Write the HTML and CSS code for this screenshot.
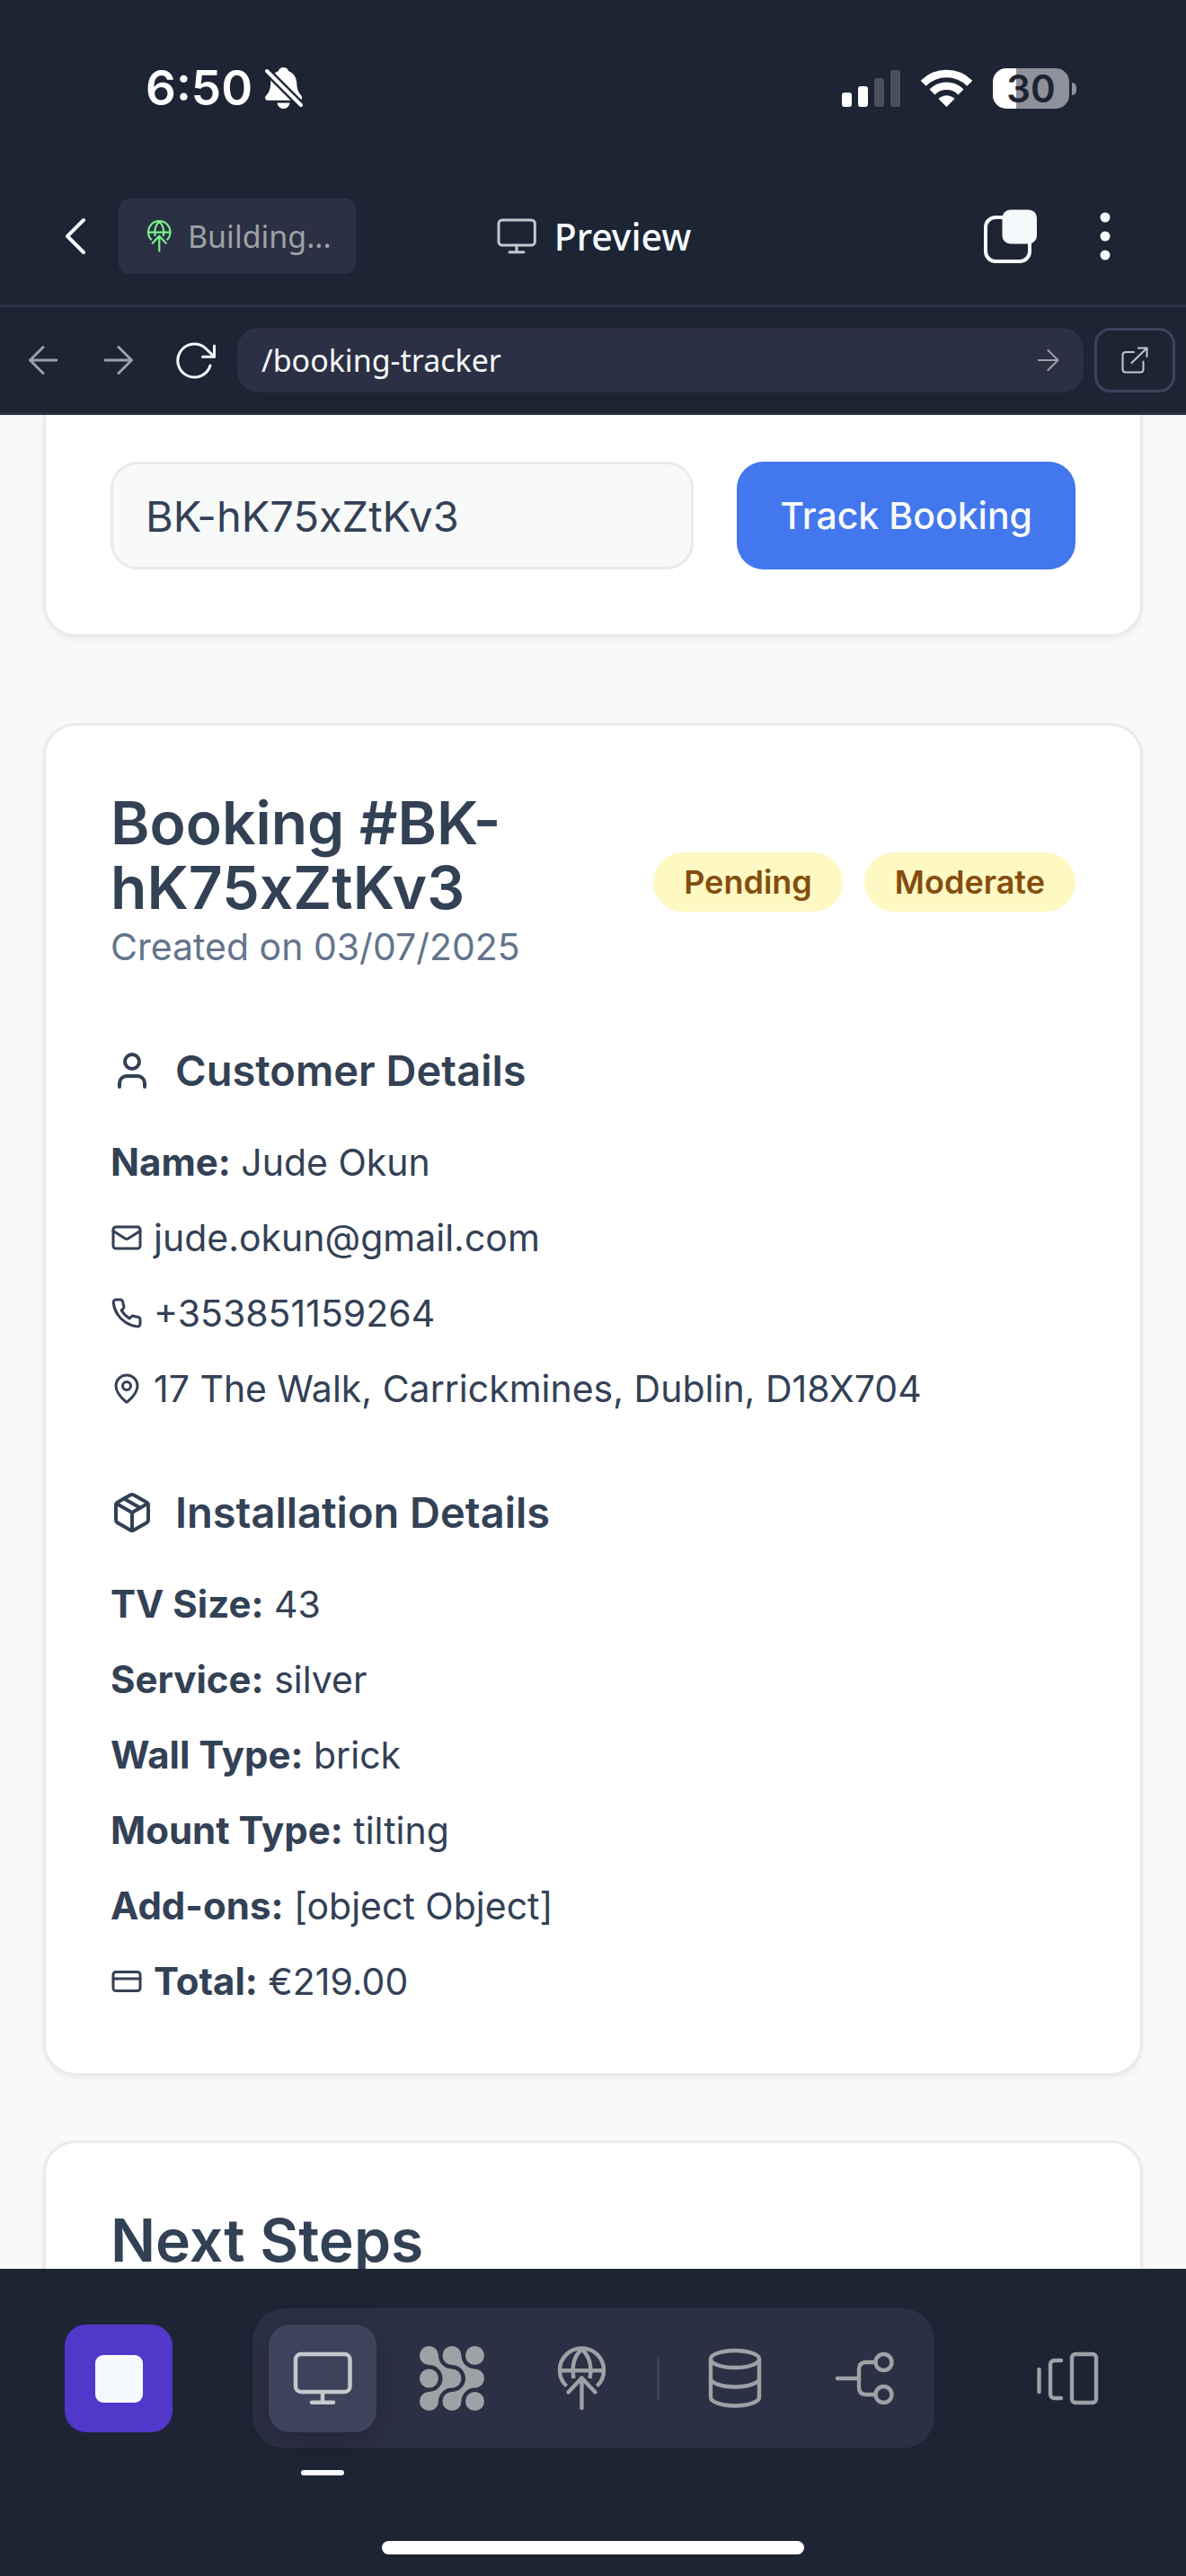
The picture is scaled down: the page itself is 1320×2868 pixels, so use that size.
FILE: index.html
```html
<!DOCTYPE html>
<html lang="en">
<head>
<meta charset="utf-8">
<meta name="viewport" content="width=device-width, initial-scale=1">
<title>Preview</title>
<link rel="stylesheet" href="styles.css">
</head>
<body>
<svg class="sprite" aria-hidden="true">
  <symbol id="monitor" viewBox="0 0 72 72"><g fill="none" stroke="currentColor" stroke-width="4.5" stroke-linecap="round"><rect x="6" y="9" width="60.500" height="42" rx="6"/><path d="M36 51V62M24 62.800H48"/></g></symbol>
  <symbol id="deploy" viewBox="0 0 72 72"><g fill="none" stroke="currentColor" stroke-width="4.4" stroke-linejoin="round"><path d="M19.500 44.500A24.500 24.500 0 1 1 53.500 44.500M12 27.300H61M36.500 3.500C28 11 25 22 27.500 36M36.500 3.500C45 11 48 22 45.500 36"/><path stroke-linecap="round" d="M36.500 69V35.500M21.500 51.500L36.500 35.500L51.500 51.500"/></g></symbol>
</svg>

<div class="status">
  <div class="status-side">
    <span class="clock">6:50</span>
    <svg class="bell" viewBox="0 0 42 46" aria-hidden="true">
      <path fill="#fff" d="M20.500 0C23 0 25.500 1.500 26 4C31.500 6 35 11 35.300 17.500C35.500 24.500 37 27.500 40 31C42 34 41 36.700 38 36.700H3C0 36.700-1 33.500 1.500 31C4.500 28 6 24 6.200 17.500C6.500 11 9.500 6 15 4C15.500 1.500 18 0 20.500 0Z"/>
      <path fill="#fff" d="M13.500 39.500H27.500C27 43.500 24 46 20.500 46C17 46 14 43.500 13.500 39.500Z"/>
      <path stroke="#1d2433" stroke-width="9" d="M0 2L42 44"/>
      <path stroke="#fff" stroke-width="4" stroke-linecap="round" d="M2 4L40 42"/>
    </svg>
  </div>
  <div class="status-side">
    <svg class="signal" viewBox="0 0 65 42" aria-hidden="true">
      <g fill="#fff"><rect y="26" width="11" height="16" rx="3"/><rect x="18" y="19" width="11" height="23" rx="3"/></g>
      <g fill="#4b505d"><rect x="36" y="10" width="11" height="32" rx="3"/><rect x="54" y="1" width="11" height="41" rx="3"/></g>
    </svg>
    <svg class="wifi" viewBox="0 0 57 42" aria-hidden="true">
      <path fill="none" stroke="#fff" stroke-width="8.500" d="M2.700 15.800A36 36 0 0 1 54.300 15.800M12.500 25.500A22.500 22.500 0 0 1 44.500 25.500"/>
      <path fill="#fff" d="M19.500 33Q28.500 25.500 37.500 33L28.500 42Z"/>
    </svg>
    <span class="battery">30</span>
  </div>
</div>

<header class="header">
  <div class="header-left">
    <button class="icon-btn" aria-label="Back"><svg width="24" height="42" viewBox="0 0 24 42"><path fill="none" stroke="#f5f9fc" stroke-width="4" stroke-linecap="round" stroke-linejoin="round" d="M21 3L3 21L21 39"/></svg></button>
    <button class="chip"><svg class="chip-icon"><use href="#deploy"/></svg>Building...</button>
  </div>
  <h1 class="title"><svg class="title-icon"><use href="#monitor"/></svg>Preview</h1>
  <div class="header-right">
    <button class="icon-btn" aria-label="Open windows"><svg width="60" height="60" viewBox="0 0 60 60"><rect x="2" y="9" width="49" height="49" rx="11" fill="none" stroke="#f5f9fc" stroke-width="4"/><rect x="20.500" y=".5" width="38.500" height="38" rx="9" fill="#f5f9fc"/></svg></button>
    <button class="icon-btn" aria-label="More"><svg width="12" height="54" viewBox="0 0 12 54" fill="#f5f9fc"><circle cx="6" cy="6" r="5.500"/><circle cx="6" cy="27" r="5.500"/><circle cx="6" cy="48" r="5.500"/></svg></button>
  </div>
</header>

<nav class="address" aria-label="Address bar">
  <div class="address-nav">
    <button class="icon-btn" aria-label="Previous page"><svg width="32" height="32" viewBox="0 0 32 32"><path class="line dim" d="M31 16H1.500M16 1.500L1.500 16L16 30.500"/></svg></button>
    <button class="icon-btn" aria-label="Next page"><svg width="32" height="32" viewBox="0 0 32 32"><path class="line dim" d="M1 16H30.500M16 1.500L30.500 16L16 30.500"/></svg></button>
    <button class="icon-btn" aria-label="Reload"><svg width="48" height="48" viewBox="0 0 48 48"><path class="line bright" d="M42 30A18.500 18.500 0 1 1 37.500 11.500L46.500 20.300M46.500 8V20.300H33.500"/></svg></button>
  </div>
  <div class="url">
    <input class="url-input" type="text" value="/booking-tracker" aria-label="Path">
    <button class="url-go" aria-label="Go"><svg width="24" height="24" viewBox="0 0 24 24"><path class="line dim thin" d="M1 12H22.500M11.500 1L22.500 12L11.500 23"/></svg></button>
  </div>
  <button class="external" aria-label="Open in new tab"><svg width="30" height="30" viewBox="0 0 30 30"><path class="line pale thin" d="M14 6H5Q1.500 6 1.500 9.500V25Q1.500 28.500 5 28.500H21.500Q24.500 28.500 24.500 25V16.500M11.500 18L28.500 1.500M19 1.500H28.500V11"/></svg></button>
</nav>

<main class="page">
  <section class="card search-card">
    <form class="search">
      <input class="field" type="text" value="BK-hK75xZtKv3" aria-label="Booking number">
      <button class="primary" type="button">Track Booking</button>
    </form>
  </section>

  <section class="card booking">
    <div class="booking-head">
      <div class="booking-id">
        <h2 class="heading">Booking #BK-<wbr>hK75xZtKv3</h2>
        <p class="created">Created on 03/07/2025</p>
      </div>
      <div class="badges"><span class="badge">Pending</span><span class="badge">Moderate</span></div>
    </div>

    <div class="group">
      <h3 class="subheading"><svg class="lucide" viewBox="0 0 24 24"><path d="M19 21v-2a4 4 0 0 0-4-4H9a4 4 0 0 0-4 4v2"/><circle cx="12" cy="7" r="4"/></svg>Customer Details</h3>
      <div class="rows">
        <p><strong>Name:</strong> Jude Okun</p>
        <p class="with-icon"><svg class="lucide small" viewBox="0 0 24 24"><rect width="20" height="16" x="2" y="4" rx="2"/><path d="m22 7-8.970 5.700a1.940 1.940 0 0 1-2.060 0L2 7"/></svg>jude.okun@gmail.com</p>
        <p class="with-icon"><svg class="lucide small" viewBox="0 0 24 24"><path d="M22 16.920v3a2 2 0 0 1-2.180 2 19.790 19.790 0 0 1-8.630-3.070 19.500 19.500 0 0 1-6-6 19.790 19.790 0 0 1-3.070-8.670A2 2 0 0 1 4.110 2h3a2 2 0 0 1 2 1.720 12.840 12.840 0 0 0 .7 2.810 2 2 0 0 1-.45 2.110L8.090 9.910a16 16 0 0 0 6 6l1.270-1.270a2 2 0 0 1 2.110-.45 12.840 12.840 0 0 0 2.810.7A2 2 0 0 1 22 16.920z"/></svg>+353851159264</p>
        <p class="with-icon"><svg class="lucide small" viewBox="0 0 24 24"><path d="M20 10c0 4.993-5.539 10.193-7.399 11.799a1 1 0 0 1-1.202 0C9.539 20.193 4 14.993 4 10a8 8 0 0 1 16 0"/><circle cx="12" cy="10" r="3"/></svg>17 The Walk, Carrickmines, Dublin, D18X704</p>
      </div>
    </div>

    <div class="group">
      <h3 class="subheading"><svg class="lucide" viewBox="0 0 24 24"><path d="m7.500 4.270 9 5.150"/><path d="M21 8a2 2 0 0 0-1-1.730l-7-4a2 2 0 0 0-2 0l-7 4A2 2 0 0 0 3 8v8a2 2 0 0 0 1 1.730l7 4a2 2 0 0 0 2 0l7-4A2 2 0 0 0 21 16Z"/><path d="m3.300 7 8.700 5 8.700-5"/><path d="M12 22V12"/></svg>Installation Details</h3>
      <div class="rows">
        <p><strong>TV Size:</strong> 43</p>
        <p><strong>Service:</strong> silver</p>
        <p><strong>Wall Type:</strong> brick</p>
        <p><strong>Mount Type:</strong> tilting</p>
        <p><strong>Add-ons:</strong> [object Object]</p>
        <p class="with-icon"><svg class="lucide small" viewBox="0 0 24 24"><rect width="20" height="14" x="2" y="5" rx="2"/><path d="M2 10h20"/></svg><span><strong>Total:</strong> €219.00</span></p>
      </div>
    </div>
  </section>

  <section class="card">
    <h2 class="heading">Next Steps</h2>
  </section>
</main>

<footer class="dock">
  <div class="dock-row">
    <button class="stop" aria-label="Stop"><span class="stop-mark"></span></button>
    <div class="tabs">
      <button class="tab active" aria-label="Preview"><svg class="tab-icon"><use href="#monitor"/></svg></button>
      <button class="tab" aria-label="Agent"><svg class="tab-icon" viewBox="0 0 72 72" fill="currentColor"><path d="M10.500 0A10.500 10.500 0 0 1 21 10.500A15 15 0 0 0 36 25.500A10.500 10.500 0 0 1 36 46.500A15 15 0 0 0 21 61.500A10.500 10.500 0 1 1 10.500 51A15 15 0 0 0 10.500 21A10.500 10.500 0 0 1 10.500 0Z"/><path d="M36 0A10.500 10.500 0 0 1 46.500 10.500A15 15 0 0 0 61.500 25.500A10.500 10.500 0 0 1 61.500 46.500A15 15 0 0 0 46.500 61.500A10.500 10.500 0 1 1 36 51A15 15 0 0 0 36 21A10.500 10.500 0 0 1 36 0Z"/><circle cx="61.500" cy="10.500" r="10.500"/><circle cx="10.500" cy="36" r="10.500"/><circle cx="61.500" cy="61.500" r="10.500"/></svg></button>
      <button class="tab" aria-label="Deployments"><svg class="tab-icon"><use href="#deploy"/></svg></button>
      <span class="divider"></span>
      <button class="tab" aria-label="Database"><svg class="tab-icon" viewBox="0 0 72 72" fill="none" stroke="currentColor" stroke-width="4.400"><ellipse cx="36" cy="14.500" rx="27" ry="9.500"/><path d="M9 14.500V57C9 62 21 66.500 36 66.500S63 62 63 57V14.500M9 36C9 41 21 45.500 36 45.500S63 41 63 36"/></svg></button>
      <button class="tab" aria-label="Version control"><svg class="tab-icon" viewBox="0 0 72 72" fill="none" stroke="currentColor" stroke-width="4.400"><circle cx="57.500" cy="18" r="9"/><circle cx="57.500" cy="54" r="9"/><path d="M48.500 18H38Q30 18 30 26V46Q30 54 38 54H48.500"/><path stroke-linecap="round" d="M6 36H30"/></svg></button>
    </div>
    <button class="panels" aria-label="Switch panel"><svg class="tab-icon" viewBox="0 0 72 72" fill="none" stroke="currentColor" stroke-width="4.400" stroke-linecap="round"><path d="M4.500 26V51M29 16H22Q17 16 17 21V53Q17 58 22 58H29"/><rect x="41" y="9" width="27" height="54" rx="4"/></svg></button>
  </div>
  <span class="home"></span>
</footer>
</body>
</html>
```
FILE: styles.css
```css
* { box-sizing: border-box; margin: 0; padding: 0; }

:root {
  --ink: #1d2433;
  --panel: #2c3044;
  --raised: #3d435b;
  --bright: #f5f9fc;
  --pale: #c5c9cd;
  --dim: #9ea2a6;
  --text: #334155;
  --line: #e8eaed;
  --paper: #f8fafa;
}

body {
  display: flex;
  flex-direction: column;
  height: 100vh;
  overflow: hidden;
  background: var(--ink);
  color: var(--text);
  font-family: Inter, "Liberation Sans", sans-serif;
  font-size: 41px;
  line-height: 60px;
}

button, input { font: inherit; color: inherit; border: 0; background: none; }
button { display: flex; align-items: center; justify-content: center; flex: none; cursor: pointer; }
svg { display: block; flex: none; }
.sprite { position: absolute; width: 0; height: 0; }

/* status bar */
.status {
  display: flex;
  align-items: center;
  justify-content: space-between;
  flex: none;
  height: 187px;
  padding: 9px 122px 0 162px;
}
.status-side { display: flex; align-items: center; }
.clock { color: #fff; font-size: 53px; font-weight: 600; }
.bell { width: 42px; height: 46px; margin-left: 14px; }
.signal { width: 65px; height: 42px; }
.wifi { width: 57px; height: 42px; margin: 0 23px; }
.battery {
  position: relative;
  width: 85px;
  height: 45px;
  margin-right: 8px;
  border-radius: 15px;
  background: linear-gradient(90deg, #fff 26px, #8e9199 26px);
  color: var(--ink);
  font-size: 42px;
  font-weight: 600;
  line-height: 45px;
  text-align: center;
}
.battery::after {
  content: "";
  position: absolute;
  right: -8px;
  top: 16px;
  width: 5px;
  height: 14px;
  border-radius: 0 5px 5px 0;
  background: #8e9199;
}

/* header */
.header {
  display: grid;
  grid-template-columns: 1fr auto 1fr;
  align-items: center;
  flex: none;
  height: 155px;
  padding: 0 48px;
  border-bottom: 3px solid var(--panel);
  font-family: "Noto Sans", sans-serif;
}
.header-left { display: flex; align-items: center; gap: 6px; margin-left: -6px; }
.header-right { display: flex; justify-content: flex-end; gap: 21px; }
.icon-btn { width: 84px; height: 84px; }
.chip {
  gap: 14px;
  height: 84px;
  padding: 0 27px;
  border-radius: 12px;
  background: var(--panel);
  color: var(--dim);
  font-size: 34px;
}
.chip-icon { width: 36px; height: 36px; color: #79f08a; }
.title {
  display: flex;
  align-items: center;
  gap: 18px;
  color: var(--bright);
  font-size: 41px;
  font-weight: 500;
}
.title-icon { width: 48px; height: 48px; color: var(--pale); }

/* address bar */
.address {
  display: flex;
  align-items: center;
  gap: 12px;
  flex: none;
  height: 120px;
  padding: 0 12px 0 6px;
  border-bottom: 3px solid var(--panel);
  font-family: "Noto Sans", sans-serif;
}
.address-nav { display: flex; }
.address-nav .icon-btn { height: 72px; }
.url {
  display: flex;
  flex: 1;
  height: 72px;
  margin-left: -6px;
  border-radius: 24px;
  background: var(--panel);
}
.url-input { flex: 1; min-width: 0; padding-left: 27px; color: var(--bright); font-size: 34px; }
.url-go { width: 78px; }
.external { width: 90px; height: 72px; border: 3px solid var(--raised); border-radius: 18px; }
.line { fill: none; stroke-width: 3; stroke-linecap: round; stroke-linejoin: round; }
.thin { stroke-width: 2; }
.dim { stroke: var(--dim); }
.pale { stroke: var(--pale); }
.bright { stroke: var(--bright); }

/* previewed page */
.page {
  flex: 1;
  min-height: 0;
  overflow: hidden;
  padding: 0 48px;
  background: var(--paper);
}
.card {
  padding: 72px;
  border: 3px solid var(--line);
  border-radius: 36px;
  background: #fff;
  box-shadow: 0 3px 6px rgba(0, 0, 0, 0.05);
}
.search-card {
  margin-bottom: 96px;
  padding-top: 52px;
  border-top: 0;
  border-radius: 0 0 36px 36px;
}
.search { display: flex; gap: 48px; }
.field {
  flex: 1;
  min-width: 0;
  height: 120px;
  padding: 0 36px;
  border: 3px solid var(--line);
  border-radius: 30px;
  background: var(--paper);
  font-size: 47px;
}
.primary {
  height: 120px;
  padding: 0 48px;
  border-radius: 30px;
  background: #4277ee;
  color: var(--paper);
  font-weight: 500;
}
.booking { margin-bottom: 72px; }
.booking-head { display: flex; align-items: center; justify-content: space-between; gap: 24px; }
.heading { font-size: 66px; font-weight: 600; line-height: 72px; }
.created { color: #64748b; }
.badges { display: flex; flex: none; gap: 24px; }
.badge {
  padding: 3px 34px;
  border-radius: 33px;
  background: #fef8c3;
  color: #854d0e;
  font-size: 36px;
  font-weight: 600;
}
.group { padding-top: 72px; }
.subheading {
  display: flex;
  align-items: center;
  gap: 24px;
  margin-bottom: 36px;
  font-size: 47px;
  font-weight: 600;
  line-height: 72px;
}
.rows { display: flex; flex-direction: column; gap: 24px; }
.rows strong { font-size: 42px; font-weight: 700; }
.with-icon { display: flex; align-items: center; gap: 12px; }
.lucide {
  width: 48px;
  height: 48px;
  fill: none;
  stroke: currentColor;
  stroke-width: 2;
  stroke-linecap: round;
  stroke-linejoin: round;
}
.small { width: 36px; height: 36px; }

/* dock */
.dock {
  display: flex;
  flex-direction: column;
  justify-content: space-between;
  flex: none;
  height: 342px;
  padding: 44px 72px 24px;
}
.dock-row { display: flex; align-items: center; justify-content: space-between; }
.stop { width: 120px; height: 120px; border-radius: 24px; background: #5138cb; }
.stop-mark { width: 53px; height: 53px; border-radius: 9px; background: var(--bright); }
.tabs {
  display: flex;
  align-items: center;
  gap: 24px;
  padding: 18px;
  border-radius: 36px;
  background: var(--panel);
}
.tab { position: relative; width: 120px; height: 120px; border-radius: 24px; color: var(--dim); }
.active { background: var(--raised); color: var(--pale); box-shadow: 0 12px 36px rgba(0, 0, 0, 0.2); }
.active::after {
  content: "";
  position: absolute;
  left: 36px;
  bottom: -48px;
  width: 48px;
  height: 6px;
  border-radius: 3px;
  background: var(--bright);
}
.tab-icon { width: 72px; height: 72px; }
.divider { width: 3px; height: 48px; background: var(--raised); }
.panels { width: 120px; height: 120px; color: var(--dim); }
.home { align-self: center; width: 470px; height: 15px; border-radius: 8px; background: #fff; }
```
